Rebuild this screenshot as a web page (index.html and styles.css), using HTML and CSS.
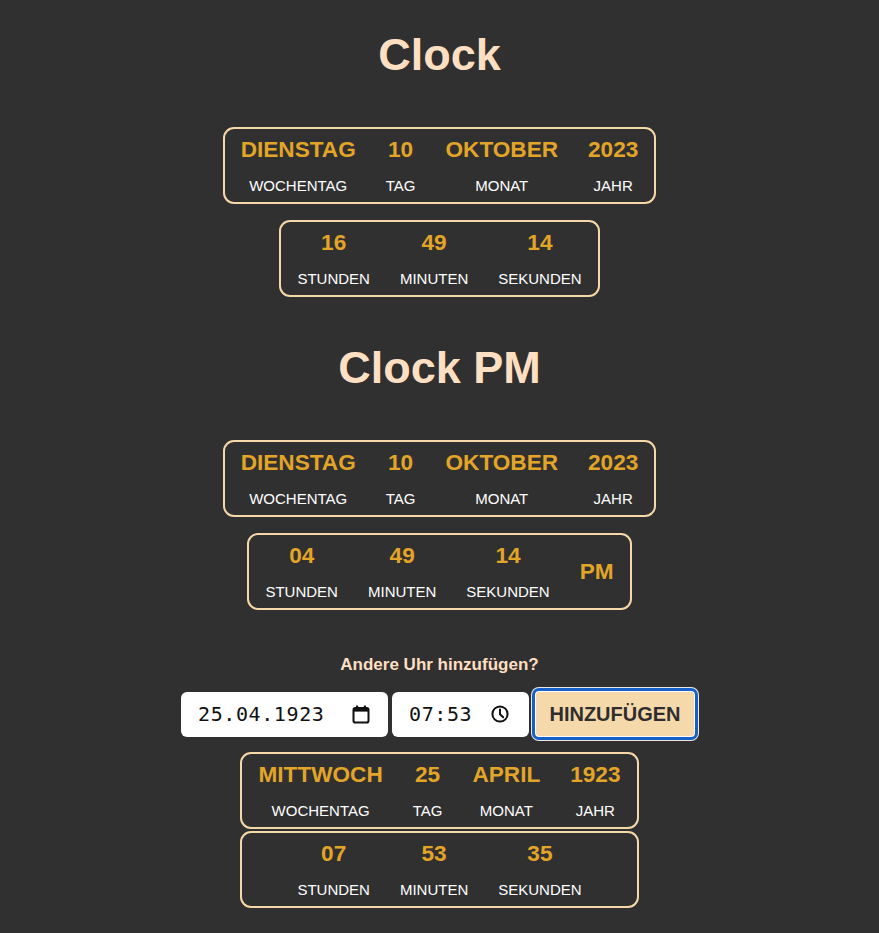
FILE: index.html
```html
<!DOCTYPE html>
<html lang="de">
<head>
<meta charset="utf-8">
<title>Clock</title>
<link rel="stylesheet" href="styles.css">
</head>
<body>
<main class="page">
  <h1 class="title">Clock</h1>
  <div class="box">
    <div class="unit"><span class="value">DIENSTAG</span><span class="label">WOCHENTAG</span></div>
    <div class="unit"><span class="value">10</span><span class="label">TAG</span></div>
    <div class="unit"><span class="value">OKTOBER</span><span class="label">MONAT</span></div>
    <div class="unit"><span class="value">2023</span><span class="label">JAHR</span></div>
  </div>
  <div class="box box-time">
    <div class="unit"><span class="value">16</span><span class="label">STUNDEN</span></div>
    <div class="unit"><span class="value">49</span><span class="label">MINUTEN</span></div>
    <div class="unit"><span class="value">14</span><span class="label">SEKUNDEN</span></div>
  </div>

  <h1 class="title title-pm">Clock PM</h1>
  <div class="box">
    <div class="unit"><span class="value">DIENSTAG</span><span class="label">WOCHENTAG</span></div>
    <div class="unit"><span class="value">10</span><span class="label">TAG</span></div>
    <div class="unit"><span class="value">OKTOBER</span><span class="label">MONAT</span></div>
    <div class="unit"><span class="value">2023</span><span class="label">JAHR</span></div>
  </div>
  <div class="box box-time">
    <div class="unit"><span class="value">04</span><span class="label">STUNDEN</span></div>
    <div class="unit"><span class="value">49</span><span class="label">MINUTEN</span></div>
    <div class="unit"><span class="value">14</span><span class="label">SEKUNDEN</span></div>
    <span class="value ampm">PM</span>
  </div>

  <p class="question">Andere Uhr hinzufügen?</p>
  <div class="form-row">
    <div class="field field-date">
      <span class="field-text">25.04.1923</span>
      <svg class="field-icon" width="18" height="19" viewBox="0 0 18 19" aria-hidden="true">
        <rect x="1.5" y="3" width="15" height="14.5" rx="1.8" fill="none" stroke="#111" stroke-width="2"/>
        <rect x="1.5" y="3" width="15" height="3.6" fill="#111"/>
        <rect x="4" y="0.5" width="2.2" height="4" rx="0.6" fill="#111"/>
        <rect x="11.8" y="0.5" width="2.2" height="4" rx="0.6" fill="#111"/>
      </svg>
    </div>
    <div class="field field-time">
      <span class="field-text">07:53</span>
      <svg class="field-icon" width="18" height="18" viewBox="0 0 18 18" aria-hidden="true">
        <circle cx="9" cy="9" r="7.6" fill="none" stroke="#111" stroke-width="2"/>
        <path d="M9 4.4V9.2L12.2 12.2" fill="none" stroke="#111" stroke-width="2" stroke-linecap="round" stroke-linejoin="round"/>
      </svg>
    </div>
    <button class="add-btn" type="button">HINZUFÜGEN</button>
  </div>

  <div class="added">
    <div class="box">
      <div class="unit"><span class="value">MITTWOCH</span><span class="label">WOCHENTAG</span></div>
      <div class="unit"><span class="value">25</span><span class="label">TAG</span></div>
      <div class="unit"><span class="value">APRIL</span><span class="label">MONAT</span></div>
      <div class="unit"><span class="value">1923</span><span class="label">JAHR</span></div>
    </div>
    <div class="box box-center">
      <div class="unit"><span class="value">07</span><span class="label">STUNDEN</span></div>
      <div class="unit"><span class="value">53</span><span class="label">MINUTEN</span></div>
      <div class="unit"><span class="value">35</span><span class="label">SEKUNDEN</span></div>
    </div>
  </div>
</main>
</body>
</html>
```

FILE: styles.css
```css
html, body {
  margin: 0;
  padding: 0;
  background: #313031;
  min-height: 100%;
}

body {
  font-family: "Liberation Sans", Arial, Helvetica, sans-serif;
  color: #ffffff;
}

.page {
  display: flex;
  flex-direction: column;
  align-items: center;
  padding-top: 29px;
}

.title {
  margin: 0 0 46px;
  font-size: 45px;
  line-height: 52px;
  font-weight: bold;
  color: #ffdfc1;
}

.title-pm {
  margin-top: 45px;
}

.box {
  display: flex;
  align-items: center;
  gap: 30px;
  padding: 7px 16px;
  border: 2px solid #f6d8a8;
  border-radius: 11px;
  box-sizing: border-box;
  height: 77px;
}

.box-time {
  margin-top: 16px;
}

.unit {
  display: flex;
  flex-direction: column;
  align-items: center;
  gap: 14px;
}

.value {
  font-size: 22.6px;
  font-weight: bold;
  color: #e2a527;
  line-height: 25px;
}

.label {
  font-size: 15px;
  line-height: 17px;
  color: #ffffff;
  padding-top: 1px;
}

.question {
  margin: 45px 0 0;
  font-size: 17px;
  line-height: 20px;
  font-weight: bold;
  color: #ffdfc1;
}

.form-row {
  display: flex;
  align-items: center;
  margin-top: 13px;
}

.field {
  display: flex;
  align-items: center;
  justify-content: space-between;
  height: 45px;
  box-sizing: border-box;
  background: #ffffff;
  border-radius: 6px;
  color: #111111;
}

.field-date {
  width: 207px;
  padding: 0 18px 0 17px;
  margin-right: 4px;
}

.field-time {
  width: 137px;
  padding: 0 20px 0 17px;
  margin-right: 3px;
}

.field-text {
  font-family: "DejaVu Sans Mono", "Liberation Mono", monospace;
  font-size: 20px;
  letter-spacing: 0.6px;
}

.field-icon {
  display: block;
}

.add-btn {
  width: 166px;
  height: 52px;
  box-sizing: border-box;
  background: #f5d9ab;
  border: 3px solid #1760c8;
  border-radius: 7px;
  box-shadow: 0 0 0 1px #e9e9e9, inset 0 0 0 1px #ffffff;
  font-family: "Liberation Sans", Arial, Helvetica, sans-serif;
  font-size: 20px;
  font-weight: bold;
  color: #2f2d2e;
  padding: 0;
}

.added {
  display: flex;
  flex-direction: column;
  gap: 2px;
  margin-top: 12px;
}

.box-center {
  justify-content: center;
}
```
